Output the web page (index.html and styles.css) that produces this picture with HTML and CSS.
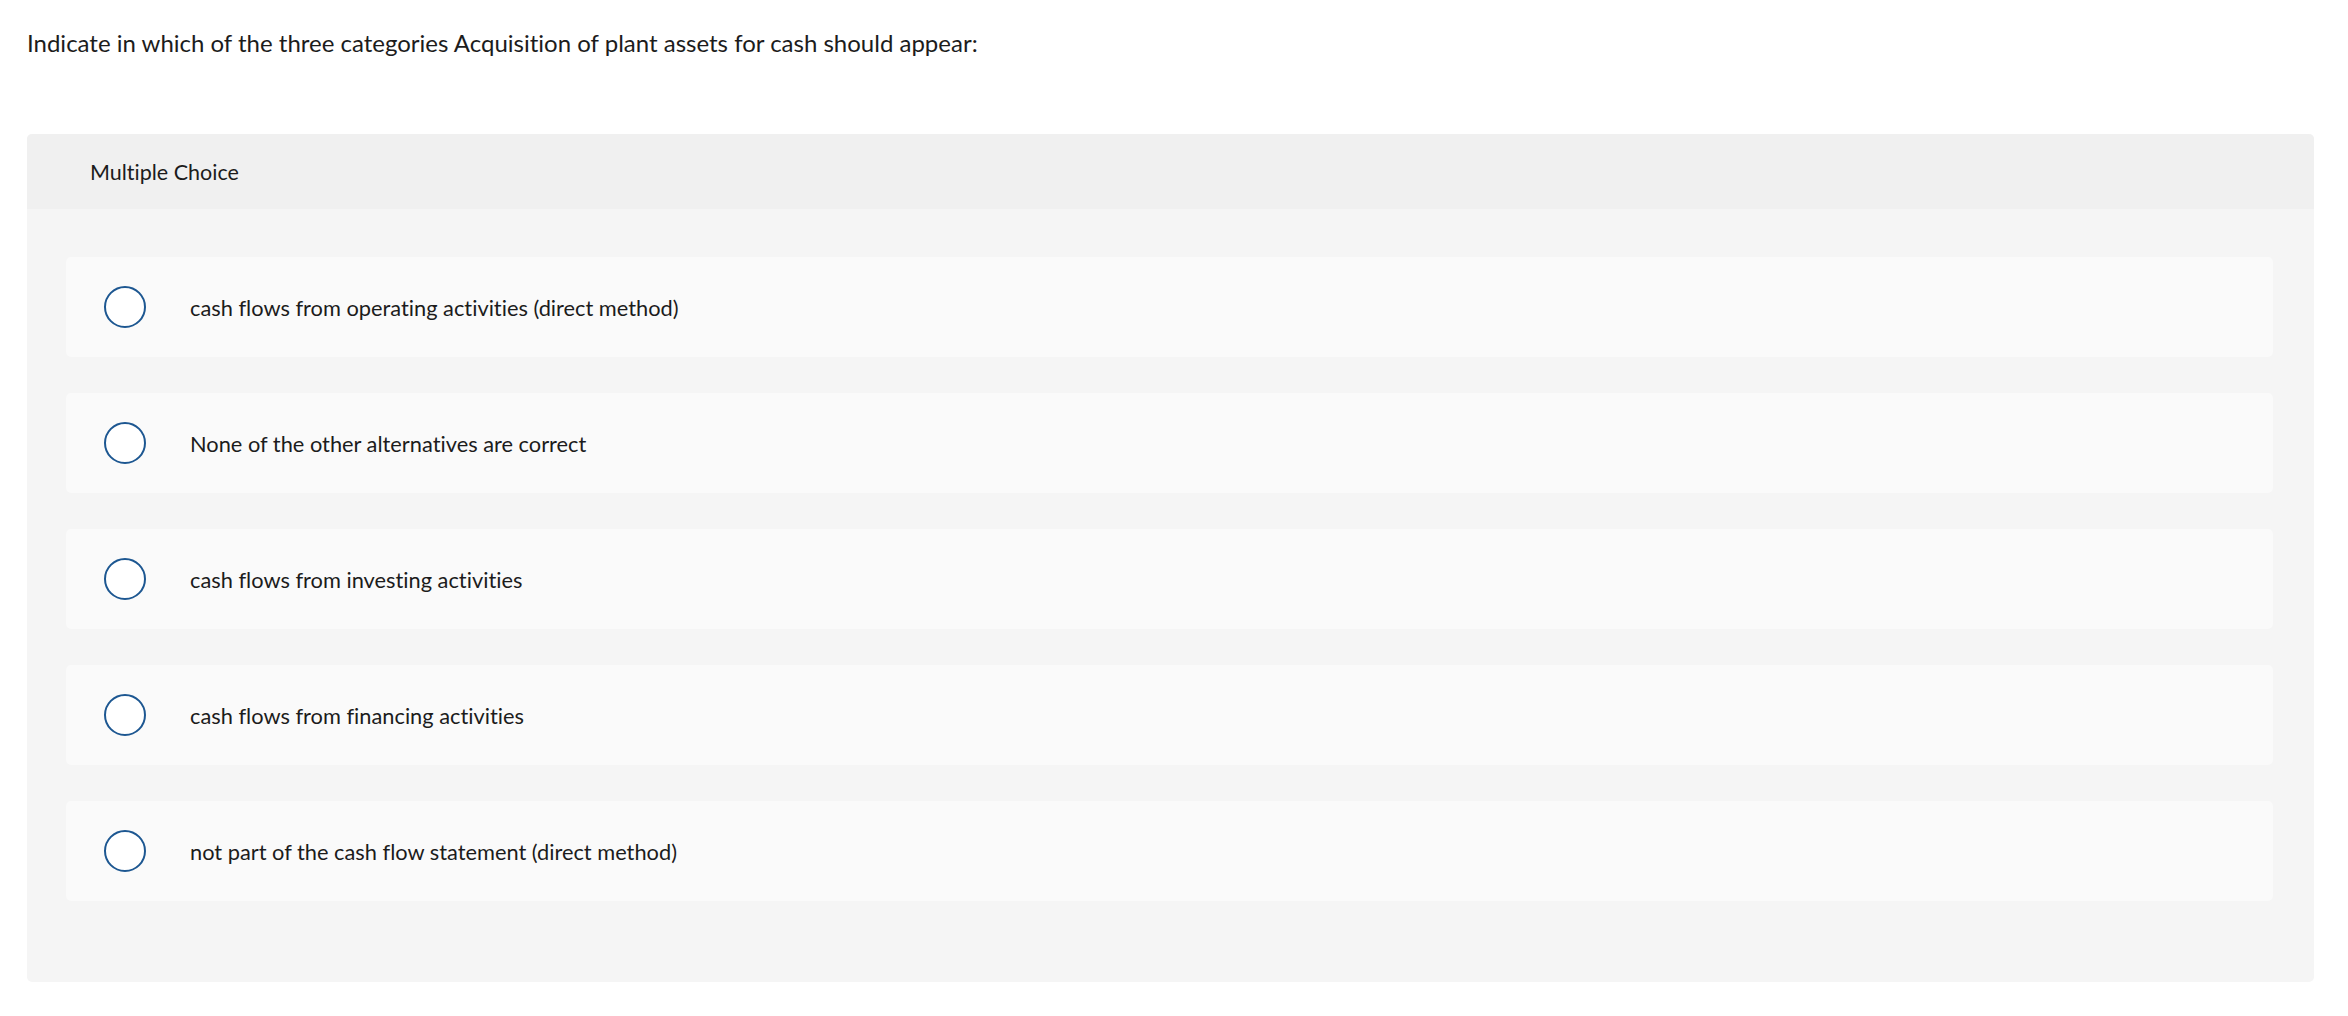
FILE: index.html
```html
<!DOCTYPE html>
<html lang="en">
<head>
<meta charset="utf-8">
<title>Multiple Choice</title>
<link rel="stylesheet" href="styles.css">
</head>
<body>
<div class="page">
  <p class="question">Indicate in which of the three categories Acquisition of plant assets for cash should appear:</p>
  <section class="panel">
    <div class="panel-header">Multiple Choice</div>
    <div class="panel-body">
      <label class="option"><span class="radio"></span><span class="option-text">cash flows from operating activities (direct method)</span></label>
      <label class="option"><span class="radio"></span><span class="option-text">None of the other alternatives are correct</span></label>
      <label class="option"><span class="radio"></span><span class="option-text">cash flows from investing activities</span></label>
      <label class="option"><span class="radio"></span><span class="option-text">cash flows from financing activities</span></label>
      <label class="option"><span class="radio"></span><span class="option-text">not part of the cash flow statement (direct method)</span></label>
    </div>
  </section>
</div>
</body>
</html>
```

FILE: styles.css
```css
html, body {
  margin: 0;
  padding: 0;
  background: #ffffff;
}

body {
  font-family: Lato, "Liberation Sans", sans-serif;
  font-variant-ligatures: none;
  color: #1c1c1c;
}

.page {
  padding: 28px 34px 0 27px;
}

.question {
  margin: 0;
  font-size: 24px;
  line-height: 30px;
}

.panel {
  margin-top: 76px;
  background: #f5f5f5;
  border-radius: 5px;
  overflow: hidden;
}

.panel-header {
  height: 75px;
  background: #f0f0f0;
  display: flex;
  align-items: center;
  padding-left: 63px;
  font-size: 21.5px;
}

.panel-body {
  display: flex;
  flex-direction: column;
  gap: 36px;
  padding: 48px 41px 81px 39px;
}

.option {
  height: 100px;
  background: #fafafa;
  border-radius: 5px;
  display: flex;
  align-items: center;
  padding-left: 38px;
  font-size: 21.8px;
  cursor: pointer;
}

.radio {
  box-sizing: border-box;
  flex: none;
  width: 42px;
  height: 42px;
  border: 2px solid #1d5791;
  border-radius: 50%;
  background: #ffffff;
}

.option-text {
  margin-left: 44px;
}
```
